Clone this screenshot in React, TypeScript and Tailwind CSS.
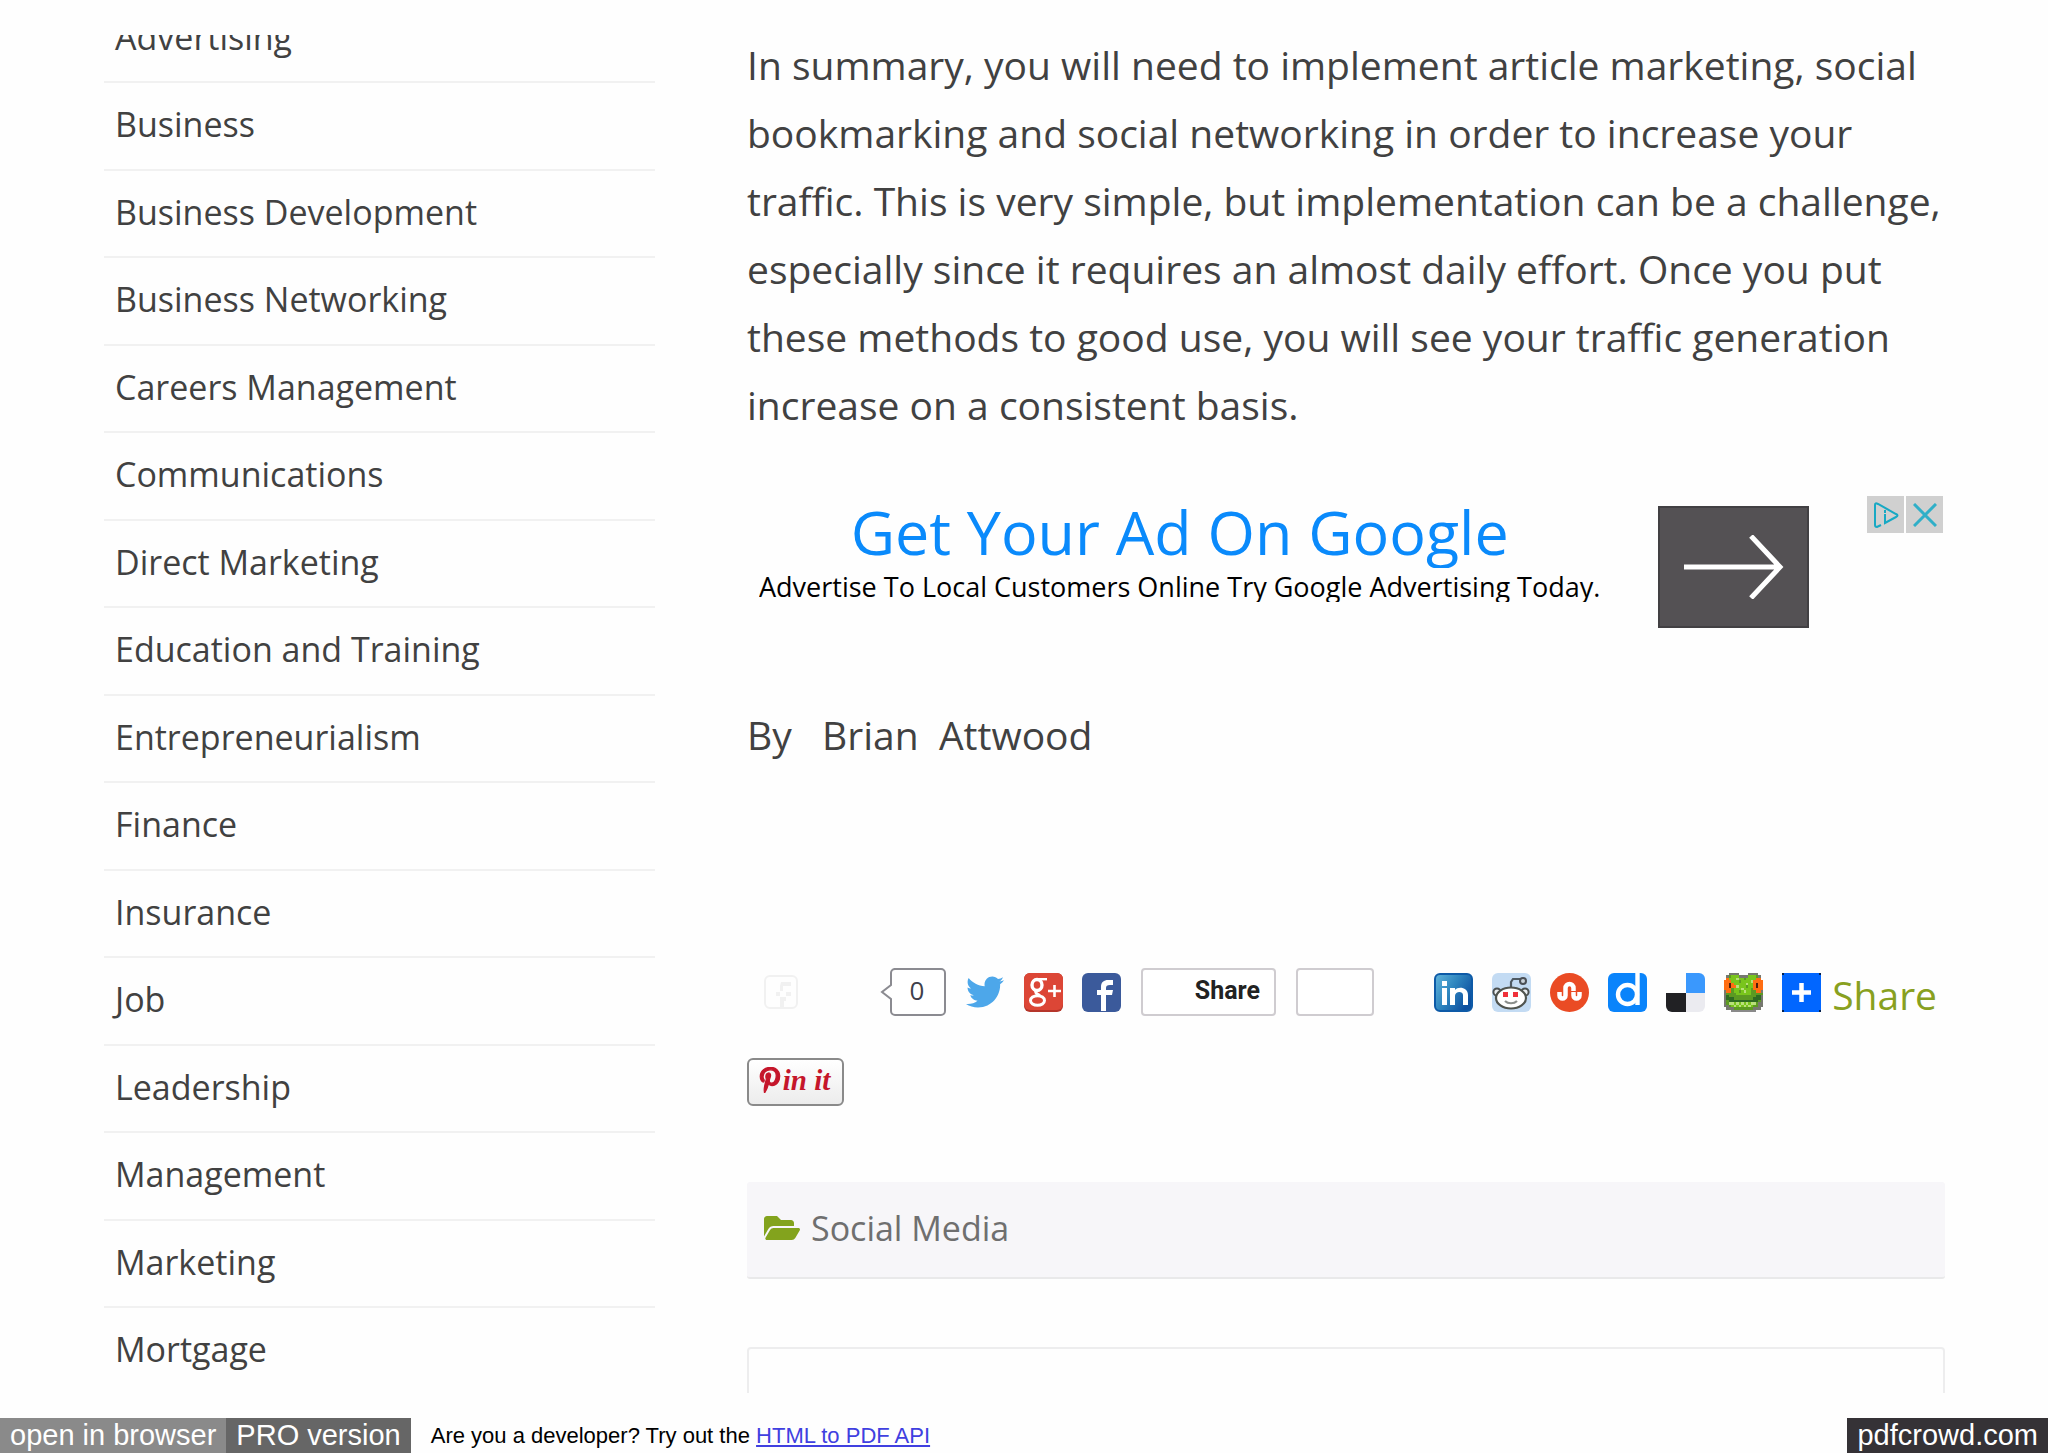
import React from "react";
import { FaFolderOpen, FaPinterestP, FaTwitter } from "react-icons/fa";

const categories = [
  "Advertising",
  "Business",
  "Business Development",
  "Business Networking",
  "Careers Management",
  "Communications",
  "Direct Marketing",
  "Education and Training",
  "Entrepreneurialism",
  "Finance",
  "Insurance",
  "Job",
  "Leadership",
  "Management",
  "Marketing",
  "Mortgage",
];

const frogColors: Record<string, string> = {
  G: "#76786f",
  g: "#79c51c",
  d: "#5c9a22",
  D: "#2f6b22",
  o: "#ff6d12",
  k: "#4a1f0c",
  l: "#b9e07a",
  e: "#8a8a8a",
};

const frogRows = [
  "..GGGG....GGGG..",
  ".GdgggGGGGgggdG.",
  ".oggglggdggggoo.",
  "ooogggdggggloooo",
  "ookoggggglggokoo",
  "ookoolgggdggokoo",
  "ooodggglgggdoooo",
  "GoodggdglggddooG",
  "Gddddggggggddddd",
  "GDdddddddddddDDG",
  "GDDDddddddddDDDG",
  "GdDDDDDDDDDDDDdG",
  "GdllglglglglldGG",
  "GGdglglglglgddGG",
  ".GGGddddddddGGG.",
  "...eeeeeeeeee...",
];

function FrogIcon() {
  return (
    <svg viewBox="0 0 16 16" className="size-[39px]" shapeRendering="crispEdges" aria-hidden="true">
      {frogRows.flatMap((row, y) =>
        row.split("").map((c, x) =>
          c === "." ? null : <rect key={`${x}-${y}`} x={x} y={y} width="1.02" height="1.02" fill={frogColors[c]} />
        )
      )}
    </svg>
  );
}

function GooglePlusIcon() {
  return (
    <svg viewBox="0 0 39 39" className="size-[39px]" aria-hidden="true">
      <rect width="39" height="39" rx="6" fill="#b5352a" />
      <rect width="39" height="37" rx="6" fill="#dc4636" />
      <g fill="none" stroke="#fff">
        <ellipse cx="13" cy="12" rx="5" ry="5.5" strokeWidth="3.4" />
        <path d="M13 6.2h10" strokeWidth="2.4" />
        <path d="M13 17.5c-3 2 0 3.500 3 5" strokeWidth="3" />
        <ellipse cx="13.500" cy="27.500" rx="7" ry="4.800" strokeWidth="3" />
        <path d="M24 18h13M30.500 12v12" strokeWidth="2.6" />
      </g>
    </svg>
  );
}

function FacebookIcon() {
  return (
    <svg viewBox="0 0 39 39" className="size-[39px]" aria-hidden="true">
      <rect width="39" height="39" rx="6" fill="#3b5a9b" />
      <path d="M19 38V22h-4v-5h4v-3c0-5 3-7 7-7h5v5h-3c-3 0-4 1-4 3v2h7l-1 5h-6v16z" fill="#fff" />
    </svg>
  );
}

function LinkedinIcon() {
  return (
    <svg viewBox="0 0 39 39" className="size-[39px]" aria-hidden="true">
      <defs>
        <linearGradient id="linkedin-fill" x1="0" y1="0" x2="1" y2="0.6">
          <stop offset="0" stopColor="#62b5dc" />
          <stop offset="0.5" stopColor="#2f86bf" />
          <stop offset="1" stopColor="#0c4fa0" />
        </linearGradient>
      </defs>
      <rect x="1" y="1" width="37" height="37" rx="5" fill="url(#linkedin-fill)" stroke="#0d5aa7" strokeWidth="2" />
      <rect x="8" y="8" width="5" height="5" fill="#fff" />
      <rect x="8" y="15" width="5" height="17" fill="#fff" />
      <path d="M16 15h5v2c3-4 13-3 13 5v10h-5V22c0-4-8-4-8 1v9h-5z" fill="#fff" />
    </svg>
  );
}

function RedditIcon() {
  return (
    <svg viewBox="0 0 39 39" className="size-[39px]" aria-hidden="true">
      <rect width="39" height="39" rx="6" fill="#c3dbf3" />
      <path d="M19 15V9l2-3h8" fill="none" stroke="#4f5a63" strokeWidth="2.2" />
      <circle cx="31" cy="8" r="3" fill="#c9d2da" stroke="#4a4f55" strokeWidth="2" />
      <circle cx="5" cy="19" r="3.600" fill="#e9edf0" stroke="#4a4f50" strokeWidth="2" />
      <circle cx="33" cy="19" r="3.600" fill="#e9edf0" stroke="#4a4f50" strokeWidth="2" />
      <ellipse cx="19" cy="25" rx="15" ry="10.500" fill="#fff" stroke="#50544f" strokeWidth="2.200" />
      <rect x="11" y="19" width="5" height="5" fill="#f0313a" />
      <rect x="21" y="19" width="5" height="5" fill="#f0313a" />
      <path d="M13 28c3 3 9 3 12 0" fill="none" stroke="#8b8f8c" strokeWidth="2.200" />
    </svg>
  );
}

function StumbleIcon() {
  return (
    <svg viewBox="0 0 39 39" className="size-[39px]" aria-hidden="true">
      <circle cx="19.500" cy="19.500" r="19.500" fill="#ea4b24" />
      <g fill="none" stroke="#fff" strokeWidth="4.500">
        <path d="M9.500 19v3.500a3 3 0 0 0 6 0V15a4 4 0 0 1 8 0v3" />
        <path d="M23.500 19v3.500a3 3 0 0 0 6 0V19" />
      </g>
    </svg>
  );
}

function DiigoIcon() {
  return (
    <svg viewBox="0 0 39 39" className="size-[39px]" aria-hidden="true">
      <rect width="39" height="39" rx="6" fill="#0a84fb" />
      <circle cx="19.500" cy="21.500" r="9.500" fill="none" stroke="#fff" strokeWidth="4.400" />
      <path d="M29.500 0v32" stroke="#fff" strokeWidth="4.400" />
    </svg>
  );
}

function DeliciousIcon() {
  return (
    <svg viewBox="0 0 39 39" className="size-[39px]" aria-hidden="true">
      <path d="M20 0h13a6 6 0 0 1 6 6v14H20z" fill="#3a98fd" />
      <path d="M0 20h20v19H6a6 6 0 0 1-6-6z" fill="#212124" />
      <path d="M20 20h19v13a6 6 0 0 1-6 6H20z" fill="#ebebf0" />
    </svg>
  );
}

function PlusIcon() {
  return (
    <svg viewBox="0 0 39 39" className="size-[39px]" aria-hidden="true">
      <rect width="39" height="39" fill="#02214f" />
      <path d="M2 0h35v2h2v35h-2v2H2v-2H0V2h2z" fill="#0166ff" />
      <path d="M10 19.500h19M19.500 10v19" stroke="#fff" strokeWidth="4.500" />
    </svg>
  );
}

function FadedFacebook() {
  return (
    <svg viewBox="0 0 34 34" className="size-[34px]" aria-hidden="true">
      <rect x="1" y="1" width="32" height="32" rx="5" fill="#fefefe" stroke="#f1f1f1" strokeWidth="2" />
      <path d="M17 7h10v4h-8v5h-3v-5zM12 17h4v4h-4zM22 17h5v4h-5zM16 22h6v4h-2v6h-4z" fill="#f1f1f1" />
    </svg>
  );
}

const bookmarks = [
  { name: "LinkedIn", Icon: LinkedinIcon },
  { name: "Reddit", Icon: RedditIcon },
  { name: "StumbleUpon", Icon: StumbleIcon },
  { name: "Diigo", Icon: DiigoIcon },
  { name: "Delicious", Icon: DeliciousIcon },
  { name: "Bookmark frog", Icon: FrogIcon },
];

function Sidebar() {
  return (
    <aside className="w-[551px] shrink-0">
      <ul className="-mt-[39px]">
        {categories.map((name) => (
          <li
            key={name}
            className="border-b-2 border-[#f1f1f1] px-[11px] pt-[17px] pb-[21px] text-[34px] leading-[48px] odd:pb-5"
          >
            <a href="#">{name}</a>
          </li>
        ))}
      </ul>
    </aside>
  );
}

function Advert() {
  return (
    <section className="mt-[57px] flex h-[133px] items-start">
      <a href="#" className="mt-[5px] ml-3 block text-center">
        <span className="block h-[67px] overflow-hidden text-[61px] leading-[62px] text-[#0a8afb]">
          Get Your Ad On Google
        </span>
        <span className="block h-[34px] overflow-hidden text-[27px] leading-[38px] text-black">
          Advertise To Local Customers Online Try Google Advertising Today.
        </span>
      </a>
      <button
        type="button"
        aria-label="Open advert"
        className="mt-[10px] ml-auto flex h-[122px] w-[151px] items-center justify-center border-2 border-[#424043] bg-[#545154]"
      >
        <svg viewBox="0 0 100 64" className="h-[64px] w-[100px]" fill="none" stroke="#fff" strokeWidth="5" aria-hidden="true">
          <path d="M0 32h95M67 1l29 31-29 31" />
        </svg>
      </button>
      <div className="ml-[58px] flex gap-[2px] pr-[2px]">
        <button type="button" aria-label="Ad information" className="flex h-[37px] w-[37px] items-center justify-center bg-[#d0d0d0]">
          <svg viewBox="0 0 26 26" className="size-[26px]" fill="none" stroke="#17a9c4" strokeWidth="2" aria-hidden="true">
            <path d="M8 23l-4 2c-1 0-2 0-2-2V3c0-2 1-2 3-1l18 10c2 1 2 2 0 3l-11 6V12M12 8v3" />
          </svg>
        </button>
        <button type="button" aria-label="Close advert" className="flex h-[37px] w-[37px] items-center justify-center bg-[#d0d0d0]">
          <svg viewBox="0 0 24 24" className="size-[24px]" stroke="#2fafc8" strokeWidth="3" aria-hidden="true">
            <path d="M1 1l22 22M23 1L1 23" />
          </svg>
        </button>
      </div>
    </section>
  );
}

function ShareRow() {
  return (
    <section className="mt-[199px] flex h-12 items-center">
      <a href="#" aria-label="Like" className="ml-[17px]">
        <FadedFacebook />
      </a>
      <div className="ml-[82px] flex">
        <svg viewBox="0 0 66 48" className="h-12 w-[66px]" fill="#fff" stroke="#8b8b91" strokeWidth="2" aria-hidden="true">
          <path d="M14 1h47a4 4 0 0 1 4 4v38a4 4 0 0 1-4 4H15a4 4 0 0 1-4-4V31L2 24l9-7V5a4 4 0 0 1 4-4z" />
        </svg>
        <span className="-ml-[54px] w-[50px] text-center text-[26px] leading-[45px] text-[#3f3f4b]">0</span>
      </div>
      <a href="#" aria-label="Twitter" className="ml-6">
        <FaTwitter className="size-[38px] text-[#4da7ea]" />
      </a>
      <a href="#" aria-label="Google Plus" className="ml-5">
        <GooglePlusIcon />
      </a>
      <a href="#" aria-label="Facebook" className="ml-[19px]">
        <FacebookIcon />
      </a>
      <button
        type="button"
        className="ml-5 flex h-12 w-[135px] items-center justify-end rounded-[4px] border-2 border-[#cfccd0] bg-white pr-[14px] pb-[2px] font-[Roboto] text-[25px] leading-8 font-bold text-[#222]"
      >
        Share
      </button>
      <button type="button" aria-label="Share count" className="ml-5 h-12 w-[78px] rounded-[4px] border-2 border-[#cfccd0] bg-white" />
      <div className="ml-auto flex items-center gap-[19px]">
        {bookmarks.map(({ name, Icon }) => (
          <a key={name} href="#" aria-label={name}>
            <Icon />
          </a>
        ))}
        <a href="#" className="flex items-center gap-[11px] pr-2 text-[39px] leading-[48px] text-[#88a020]">
          <PlusIcon />
          <span className="pt-[6px]">Share</span>
        </a>
      </div>
    </section>
  );
}

function Article() {
  return (
    <article className="-mt-1 min-w-0 flex-1 text-[39px] leading-[68px]">
      <p>
        In summary, you will need to implement article marketing, social bookmarking and social networking in order to
        increase your traffic. This is very simple, but implementation can be a challenge, especially since it requires
        an almost daily effort. Once you put these methods to good use, you will see your traffic generation increase on
        a consistent basis.
      </p>
      <Advert />
      <p className="mt-[72px] whitespace-pre">By   Brian  Attwood</p>
      <ShareRow />
      <a
        href="#"
        aria-label="Pin it"
        className="mt-[42px] flex h-12 w-[97px] items-center justify-center rounded-[6px] border-2 border-[#8a8a8a] bg-linear-to-b from-white to-[#ececec] pr-1 pb-1 font-['Liberation_Serif'] text-[29px] leading-none font-bold text-[#c5162b] italic"
      >
        <FaPinterestP className="size-[26px]" stroke="currentColor" strokeWidth="24" />
        <span>in it</span>
      </a>
      <div className="mt-[76px] flex h-[97px] items-center gap-[11px] rounded-[3px] border-b-2 border-[#e9e9ea] bg-[#f7f6f9] px-[17px] pb-1 text-[34px] leading-[48px] text-[#6f6f6f]">
        <FaFolderOpen className="size-[36px] text-[#83a31d]" />
        <a href="#">Social Media</a>
      </div>
      <div className="mt-[68px] h-20 rounded-[4px] border-2 border-[#ededee]" />
    </article>
  );
}

export default function App() {
  return (
    <div className="flex h-screen flex-col bg-[#fefefe] pt-[35px] font-['Open_Sans',sans-serif] text-[#414141]">
      <main className="flex min-h-0 flex-1 gap-[92px] overflow-hidden pr-[103px] pl-[104px]">
        <Sidebar />
        <Article />
      </main>
      <footer className="mt-[25px] flex h-[35px] shrink-0 items-stretch font-['Liberation_Sans',sans-serif] text-[29px] leading-[35px] text-white">
        <a href="#" className="bg-[#8a8a8a] px-[10px]">
          open in browser
        </a>
        <a href="#" className="bg-[#666] px-[10px]">
          PRO version
        </a>
        <p className="ml-5 text-[22px] text-black">
          Are you a developer? Try out the{" "}
          <a href="#" className="text-[#4040e0] underline">
            HTML to PDF API
          </a>
        </p>
        <a href="#" className="ml-auto bg-[#353236] px-[10px]">
          pdfcrowd.com
        </a>
      </footer>
    </div>
  );
}
